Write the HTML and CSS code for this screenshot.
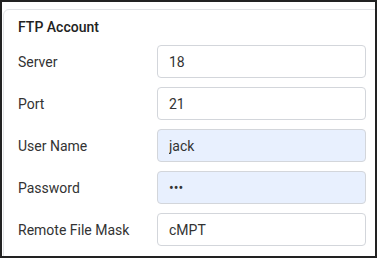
FILE: index.html
```html
<!DOCTYPE html>
<html>
<head>
  <link rel="stylesheet" href="styles.css">
</head>
<body>
  <div class="frame">
    <div class="card">
      <div class="title">FTP Account</div>
      <div class="row">
        <label class="label">Server</label>
        <input class="field" type="text" value="18">
      </div>
      <div class="row">
        <label class="label">Port</label>
        <input class="field" type="text" value="21">
      </div>
      <div class="row">
        <label class="label">User Name</label>
        <input class="field filled" type="text" value="jack">
      </div>
      <div class="row">
        <label class="label">Password</label>
        <input class="field filled" type="password" value="abc">
      </div>
      <div class="row">
        <label class="label">Remote File Mask</label>
        <input class="field" type="text" value="cMPT">
      </div>
    </div>
  </div>
</body>
</html>
```

FILE: styles.css
```css
body {
  margin: 0;
  background-color: #fff;
  font-family: Roboto, "Liberation Sans", sans-serif;
}

.frame {
  width: 377px;
  height: 258px;
  border: 2px solid #222;
  box-sizing: border-box;
  overflow: hidden;
}

.card {
  width: 380px;
  margin: 7px 0 0 1px;
  padding: 7px 14px 20px 14px;
  border: 1px solid #e2e4e7;
  border-radius: 6px;
  box-sizing: border-box;
  display: flex;
  flex-direction: column;
  gap: 9px;
}

.title {
  font-size: 14px;
  font-weight: 500;
  line-height: 20px;
  color: #222;
  margin-bottom: -1px;
}

.row {
  display: flex;
  align-items: center;
  height: 33px;
}

.label {
  width: 139px;
  font-size: 14px;
  color: #333;
}

.field {
  width: 209px;
  height: 33px;
  box-sizing: border-box;
  border: 1px solid #d3d6db;
  border-radius: 4px;
  padding: 0 11px;
  font-family: Roboto, "Liberation Sans", sans-serif;
  font-size: 14px;
  color: #333;
  background-color: #fff;
  outline: none;
}

.filled {
  background-color: #e8f0fe;
}
```
